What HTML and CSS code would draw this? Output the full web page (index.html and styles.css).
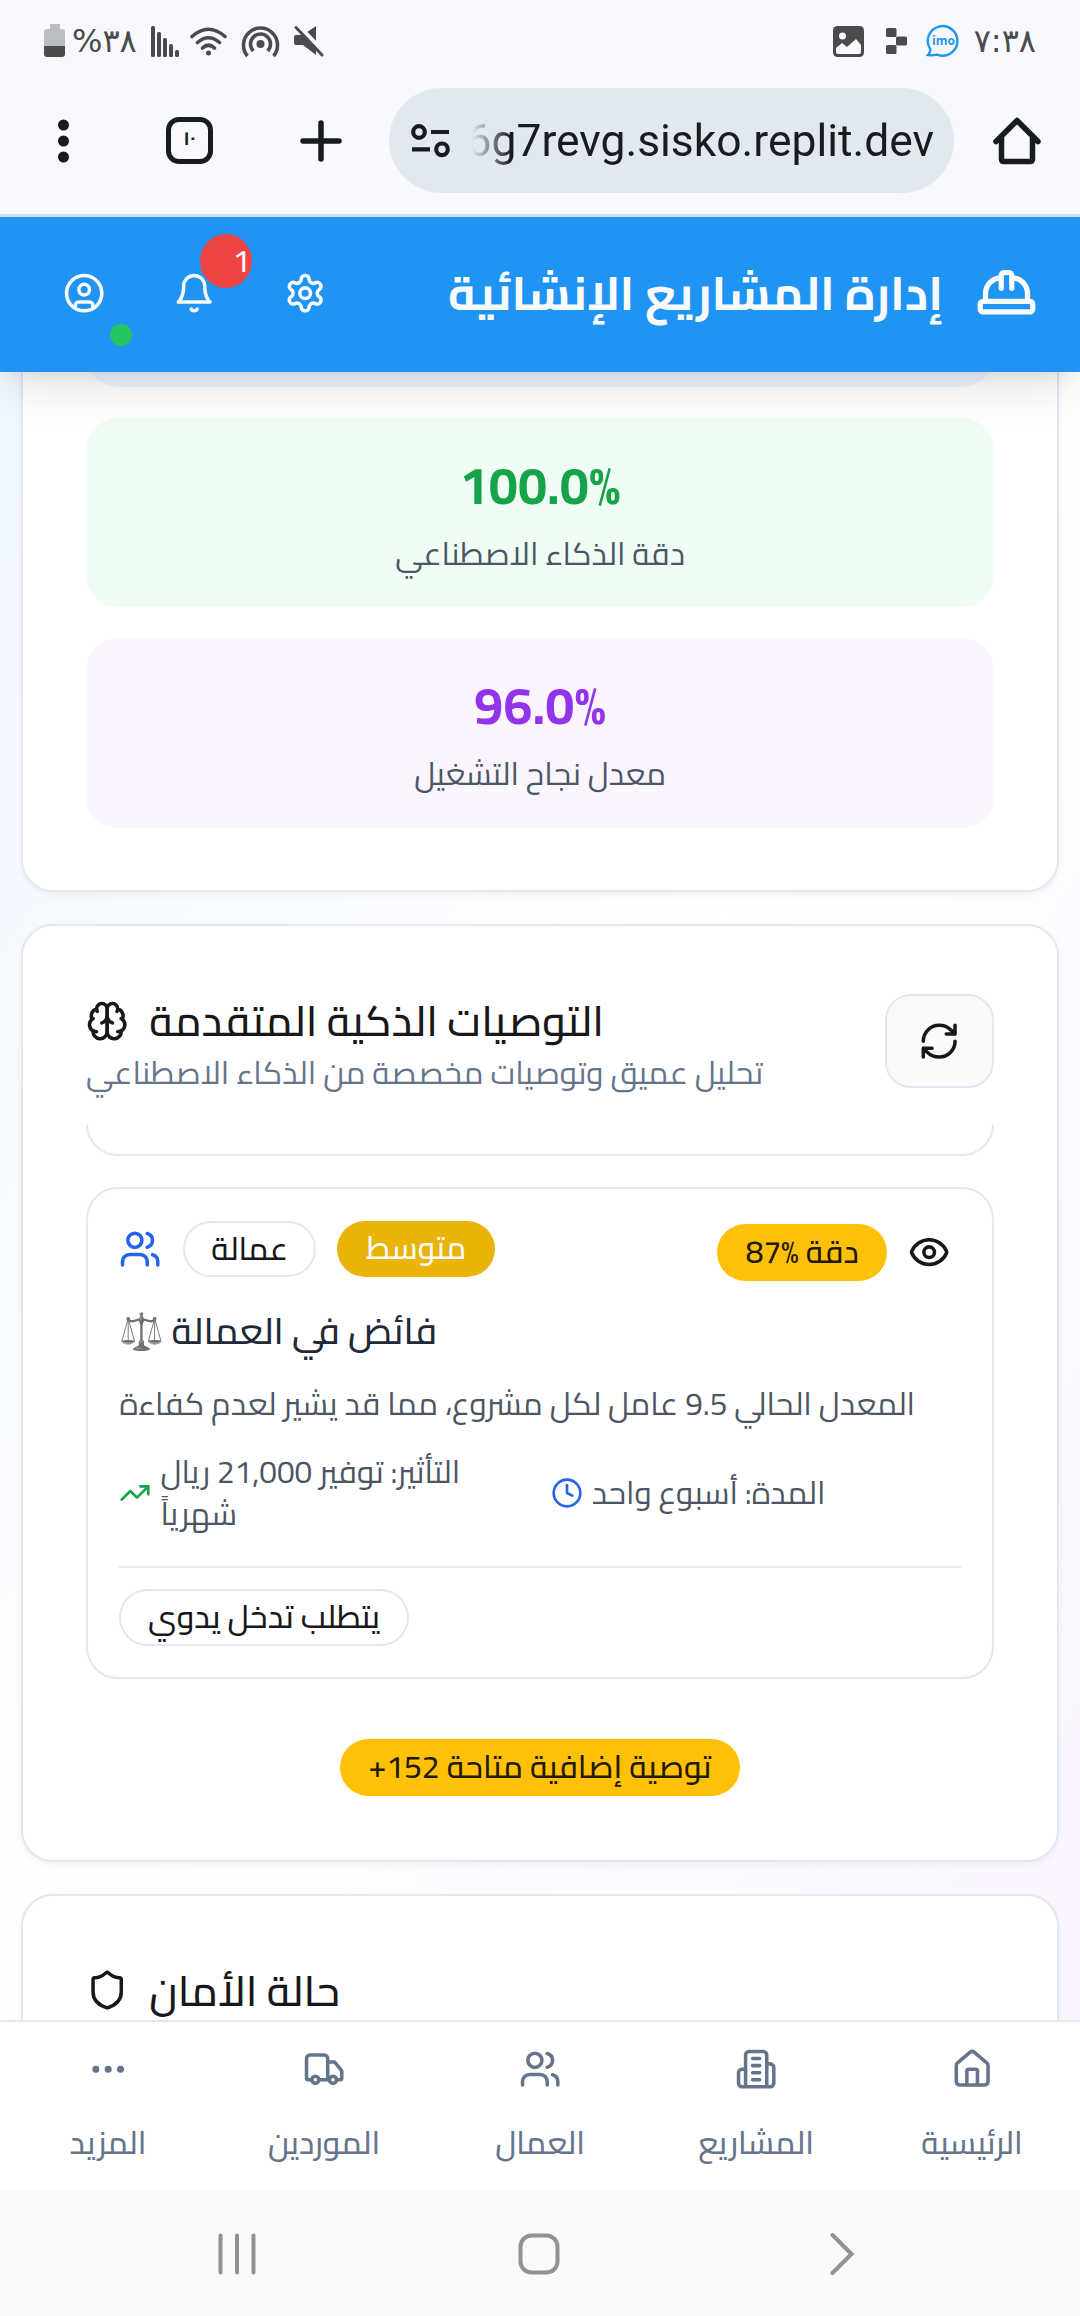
FILE: index.html
```html
<!DOCTYPE html>
<html lang="ar">
<head>
<meta charset="utf-8">
<title>إدارة المشاريع الإنشائية</title>
<link rel="stylesheet" href="styles.css">
</head>
<body>
<div class="status">
  <div class="status-group">
    <svg class="battery" width="22" height="34" viewBox="0 0 22 34"><path d="M6 0h10v5h2a3 3 0 0 1 3 3v15H0V8a3 3 0 0 1 3-3h3z" fill="#babdc2"/><path d="M0 22h21v8a3 3 0 0 1-3 3H3a3 3 0 0 1-3-3z" fill="#4a4b4d"/></svg>
    <span class="status-text battery-text">%٣٨</span>
    <svg class="signal" width="28" height="31" viewBox="0 0 28 31" fill="#4a4b4d"><rect width="4" height="31" rx="1.5"/><rect x="6" y="6" width="4" height="25" rx="1.5"/><rect x="12" y="12" width="4" height="19" rx="1.5"/><rect x="18" y="18" width="4" height="13" rx="1.5"/><rect x="24" y="24" width="4" height="7" rx="1.5"/></svg>
    <svg class="wifi" width="37" height="29" viewBox="0 0 37 29" fill="none" stroke="#4a4b4d" stroke-width="3.6" stroke-linecap="round"><path d="M2 9.500Q18.500-5 35 9.500M7.500 15.500Q18.500 6 29.500 15.500M12.500 21Q18.500 15.500 24.500 21"/><circle cx="18.500" cy="26" r="2.500" fill="#4a4b4d" stroke="none"/></svg>
    <svg class="hotspot" width="39" height="34" viewBox="0 0 39 34" fill="none" stroke="#4a4b4d" stroke-width="3.600"><path d="M6.500 32a17 17 0 1 1 26 0M12.300 27a10 10 0 1 1 14.400 0"/><circle cx="19.500" cy="20" r="4" fill="#4a4b4d" stroke="none"/></svg>
    <svg class="mute" width="30" height="32" viewBox="0 0 30 32"><path d="M2 10h7L22 1v29L9 20H2q-2 0-2-2v-6q0-2 2-2z" fill="#4a4b4d"/><path d="M3-1L31 28" stroke="#f7f9fe" stroke-width="4"/><path d="M2 2.500L28 30" stroke="#4a4b4d" stroke-width="3" stroke-linecap="round"/></svg>
  </div>
  <div class="status-group">
    <svg class="gallery" width="31" height="31" viewBox="0 0 31 31"><rect width="31" height="31" rx="4.500" fill="#4a4b4d"/><circle cx="9.500" cy="10" r="3.500" fill="#f7f9fe"/><path d="M3 22l6-5 5 4 9-8 5 6v7q0 2-2 2H5q-2 0-2-2z" fill="#f7f9fe"/></svg>
    <svg class="replit" width="21" height="26" viewBox="0 0 21 26" fill="#4a4b4d"><rect width="10.500" height="9" rx="1.500"/><rect x="10" y="8.500" width="11" height="9" rx="1.500"/><rect y="17" width="10.500" height="9" rx="1.500"/></svg>
    <svg class="imo" width="34" height="34" viewBox="0 0 34 34"><path d="M4.200 25A14.800 14.800 0 1 1 11 30.600Q7 31.500 2 31q2.500-2 2.200-6z" fill="none" stroke="#2098ec" stroke-width="2.400"/><text x="17.500" y="21" text-anchor="middle" class="imo-text">imo</text></svg>
    <span class="status-text">٧:٣٨</span>
  </div>
</div>

<div class="browser">
  <svg class="menu" width="11" height="44" viewBox="0 0 11 44" fill="#191c1f"><circle cx="5.500" cy="6" r="5.500"/><circle cx="5.500" cy="22" r="5.500"/><circle cx="5.500" cy="38" r="5.500"/></svg>
  <div class="tabs">١٠</div>
  <svg class="plus" width="42" height="42" viewBox="0 0 42 42" stroke="#191c1f" stroke-width="5.500" stroke-linecap="round"><path d="M21 3v36M3 21h36"/></svg>
  <div class="url">
    <svg width="39" height="34" viewBox="0 0 39 34" fill="none" stroke="#191c1f" stroke-width="4.200"><circle cx="8" cy="8" r="5.800"/><path d="M20 8h18M1 25.300h18"/><circle cx="31" cy="25.300" r="5.800"/></svg>
    <span class="url-text">6g7revg.sisko.replit.dev</span>
  </div>
  <svg class="chrome-home" width="48" height="48" viewBox="0 0 48 48" fill="none" stroke="#191c1f" stroke-width="5.500" stroke-linejoin="round" stroke-linecap="round"><path d="M3 24.500L24 3.500l21 21M8.500 21v21q0 2.500 2.500 2.500h26q2.500 0 2.500-2.500V21"/></svg>
</div>

<header class="header">
  <div class="actions">
    <div class="action">
      <svg class="icon" viewBox="0 0 24 24"><circle cx="12" cy="12" r="10"/><circle cx="12" cy="10" r="3"/><path d="M7 20.662V19a2 2 0 0 1 2-2h6a2 2 0 0 1 2 2v1.662"/></svg>
      <span class="online"></span>
    </div>
    <div class="action">
      <svg class="icon" viewBox="0 0 24 24"><path d="M6 8a6 6 0 0 1 12 0c0 7 3 9 3 9H3s3-2 3-9"/><path d="M10.300 21a1.940 1.940 0 0 0 3.400 0"/></svg>
      <span class="badge">1</span>
    </div>
    <div class="action">
      <svg class="icon" viewBox="0 0 24 24"><path d="M12.220 2h-.44a2 2 0 0 0-2 2v.18a2 2 0 0 1-1 1.730l-.43.25a2 2 0 0 1-2 0l-.15-.08a2 2 0 0 0-2.730.73l-.22.38a2 2 0 0 0 .73 2.730l.15.1a2 2 0 0 1 1 1.720v.51a2 2 0 0 1-1 1.740l-.15.09a2 2 0 0 0-.73 2.730l.22.38a2 2 0 0 0 2.730.73l.15-.08a2 2 0 0 1 2 0l.43.25a2 2 0 0 1 1 1.730V20a2 2 0 0 0 2 2h.44a2 2 0 0 0 2-2v-.18a2 2 0 0 1 1-1.730l.43-.25a2 2 0 0 1 2 0l.15.08a2 2 0 0 0 2.730-.73l.22-.39a2 2 0 0 0-.73-2.730l-.15-.08a2 2 0 0 1-1-1.740v-.5a2 2 0 0 1 1-1.740l.15-.09a2 2 0 0 0 .73-2.730l-.22-.38a2 2 0 0 0-2.730-.73l-.15.08a2 2 0 0 1-2 0l-.43-.25a2 2 0 0 1-1-1.730V4a2 2 0 0 0-2-2z"/><circle cx="12" cy="12" r="3"/></svg>
    </div>
  </div>
  <div class="brand">
    <h1 dir="rtl">إدارة المشاريع الإنشائية</h1>
    <svg class="icon hat" viewBox="0 0 24 24"><path d="M10 10V5a1 1 0 0 1 1-1h2a1 1 0 0 1 1 1v5M14 6a6 6 0 0 1 6 6v3M4 15v-3a6 6 0 0 1 6-6"/><rect x="2" y="15" width="20" height="4" rx="1"/></svg>
  </div>
</header>

<main class="content">
  <section class="card stats">
    <div class="tile blue"></div>
    <div class="tile green"><div class="value">100.0%</div><div class="label" dir="rtl">دقة الذكاء الاصطناعي</div></div>
    <div class="tile purple"><div class="value">96.0%</div><div class="label" dir="rtl">معدل نجاح التشغيل</div></div>
  </section>

  <section class="card advice">
    <div class="card-head">
      <div>
        <div class="title"><svg class="icon" viewBox="0 0 24 24"><path d="M12 5a3 3 0 1 0-5.997.125 4 4 0 0 0-2.526 5.770 4 4 0 0 0 .556 6.588A4 4 0 1 0 12 18Z"/><path d="M12 5a3 3 0 1 1 5.997.125 4 4 0 0 1 2.526 5.770 4 4 0 0 1-.556 6.588A4 4 0 1 1 12 18Z"/><path d="M15 13a4.500 4.500 0 0 1-3-4 4.500 4.500 0 0 1-3 4M17.599 6.500a3 3 0 0 0 .399-1.375M6.003 5.125A3 3 0 0 0 6.401 6.500M3.477 10.896a4 4 0 0 1 .585-.396M19.938 10.500a4 4 0 0 1 .585.396M6 18a4 4 0 0 1-1.967-.516M19.967 17.484A4 4 0 0 1 18 18"/></svg><h2 dir="rtl">التوصيات الذكية المتقدمة</h2></div>
        <p class="subtitle" dir="rtl">تحليل عميق وتوصيات مخصصة من الذكاء الاصطناعي</p>
      </div>
      <div class="refresh"><svg class="icon" viewBox="0 0 24 24"><path d="M3 12a9 9 0 0 1 9-9 9.750 9.750 0 0 1 6.740 2.740L21 8M21 3v5h-5M21 12a9 9 0 0 1-9 9 9.750 9.750 0 0 1-6.740-2.740L3 16M8 16H3v5"/></svg></div>
    </div>
    <div class="list">
      <div class="item-tail"></div>
      <article class="item">
        <div class="item-top">
          <div class="tags">
            <svg class="icon users" viewBox="0 0 24 24"><path d="M16 21v-2a4 4 0 0 0-4-4H6a4 4 0 0 0-4 4v2"/><circle cx="9" cy="7" r="4"/><path d="M22 21v-2a4 4 0 0 0-3-3.870M16 3.130a4 4 0 0 1 0 7.750"/></svg>
            <span class="chip outline">عمالة</span>
            <span class="chip medium">متوسط</span>
          </div>
          <div class="meta">
            <span class="chip amber">87% دقة</span>
            <svg class="icon" viewBox="0 0 24 24"><path d="M2.062 12.348a1 1 0 0 1 0-.696 10.750 10.750 0 0 1 19.876 0 1 1 0 0 1 0 .696 10.750 10.750 0 0 1-19.876 0"/><circle cx="12" cy="12" r="3"/></svg>
          </div>
        </div>
        <h3><span class="emoji">⚖️</span><span dir="rtl">فائض في العمالة</span></h3>
        <p class="desc" dir="rtl">المعدل الحالي 9.5 عامل لكل مشروع، مما قد يشير لعدم كفاءة</p>
        <div class="facts">
          <div class="fact"><svg class="icon small up" viewBox="0 0 24 24"><path d="M22 7l-8.500 8.500-5-5L2 17M16 7h6v6"/></svg><span dir="rtl">التأثير: توفير 21,000 ريال<br>شهرياً</span></div>
          <div class="fact"><svg class="icon small time" viewBox="0 0 24 24"><circle cx="12" cy="12" r="10"/><path d="M12 6v6l4 2"/></svg><span dir="rtl">المدة: أسبوع واحد</span></div>
        </div>
        <div class="item-foot"><span class="chip outline tall">يتطلب تدخل يدوي</span></div>
      </article>
    </div>
    <div class="more-row"><span class="chip amber">+152 توصية إضافية متاحة</span></div>
  </section>

  <section class="card safety">
    <div class="title"><svg class="icon" viewBox="0 0 24 24"><path d="M20 13c0 5-3.500 7.500-7.660 8.950a1 1 0 0 1-.67-.01C7.500 20.500 4 18 4 13V6a1 1 0 0 1 1-1c2 0 4.500-1.200 6.240-2.720a1.170 1.170 0 0 1 1.520 0C14.510 3.810 17 5 19 5a1 1 0 0 1 1 1z"/></svg><h2 dir="rtl">حالة الأمان</h2></div>
  </section>
</main>

<nav class="nav">
  <div class="tab"><svg class="icon" viewBox="0 0 24 24" fill="currentColor"><circle cx="12" cy="12" r="1"/><circle cx="19" cy="12" r="1"/><circle cx="5" cy="12" r="1"/></svg><span>المزيد</span></div>
  <div class="tab"><svg class="icon" viewBox="0 0 24 24"><path d="M14 18V6a2 2 0 0 0-2-2H4a2 2 0 0 0-2 2v11a1 1 0 0 0 1 1h2M15 18H9M19 18h2a1 1 0 0 0 1-1v-3.650a1 1 0 0 0-.22-.624l-3.480-4.350A1 1 0 0 0 17.520 8H14"/><circle cx="17" cy="18" r="2"/><circle cx="7" cy="18" r="2"/></svg><span>الموردين</span></div>
  <div class="tab"><svg class="icon" viewBox="0 0 24 24"><path d="M16 21v-2a4 4 0 0 0-4-4H6a4 4 0 0 0-4 4v2"/><circle cx="9" cy="7" r="4"/><path d="M22 21v-2a4 4 0 0 0-3-3.870M16 3.130a4 4 0 0 1 0 7.750"/></svg><span>العمال</span></div>
  <div class="tab"><svg class="icon" viewBox="0 0 24 24"><path d="M6 22V4a2 2 0 0 1 2-2h8a2 2 0 0 1 2 2v18ZM6 12H4a2 2 0 0 0-2 2v6a2 2 0 0 0 2 2h2M18 9h2a2 2 0 0 1 2 2v9a2 2 0 0 1-2 2h-2M10 6h4M10 10h4M10 14h4M10 18h4"/></svg><span>المشاريع</span></div>
  <div class="tab"><svg class="icon" viewBox="0 0 24 24"><path d="M15 21v-8a1 1 0 0 0-1-1h-4a1 1 0 0 0-1 1v8"/><path d="M3 10a2 2 0 0 1 .709-1.528l7-5.999a2 2 0 0 1 2.582 0l7 5.999A2 2 0 0 1 21 10v9a2 2 0 0 1-2 2H5a2 2 0 0 1-2-2z"/></svg><span>الرئيسية</span></div>
</nav>

<div class="system">
  <svg width="42" height="42" viewBox="0 0 42 42"><path d="M4.500 2.500v37M21 2.500v37M37.500 2.500v37"/></svg>
  <svg width="42" height="42" viewBox="0 0 42 42"><rect x="2.500" y="2.500" width="37" height="37" rx="11"/></svg>
  <svg width="42" height="42" viewBox="0 0 42 42"><path d="M12.500 2l19 19-19 19"/></svg>
</div>
</body>
</html>
```
FILE: styles.css
```css
* { box-sizing: border-box; margin: 0; }
body {
  width: 1080px;
  height: 2316px;
  overflow: hidden;
  display: flex;
  flex-direction: column;
  background: #f7f9fe;
  color: #18181b;
  font: 500 31.5px/42.67px Cairo, "DejaVu Sans", sans-serif;
}
svg { display: block; flex: none; }
h1, h2, h3 { font-weight: inherit; }

.icon {
  width: 42.33px;
  height: 42.33px;
  fill: none;
  stroke: currentColor;
  stroke-width: 2;
  stroke-linecap: round;
  stroke-linejoin: round;
}
.icon[fill] { fill: currentColor; }
.icon.small { width: 32px; height: 32px; }

/* Device status bar */
.status {
  height: 67px;
  padding: 15px 44px 0;
  display: flex;
  justify-content: space-between;
  align-items: center;
  color: #4a4b4d;
}
.status-group { display: flex; align-items: center; }
.status-text { font: 400 32px/40px "DejaVu Sans", sans-serif; direction: ltr; }
.battery-text { margin: 0 14px 0 6px; }
.wifi { margin-left: 11px; }
.hotspot { margin-left: 14px; }
.mute { margin-left: 14px; }
.replit { margin-left: 22px; }
.imo { margin: 0 14px 0 19px; }
.imo-text { font: 700 12px "Open Sans", sans-serif; fill: #2098ec; }

/* Browser toolbar */
.browser {
  height: 150px;
  padding: 0 39px 0 58px;
  display: flex;
  align-items: center;
  border-bottom: 3px solid #cfe2ee;
  color: #191c1f;
}
.tabs {
  width: 47px;
  height: 47px;
  margin-left: 97px;
  border: 5.5px solid #191c1f;
  border-radius: 13px;
  font: 700 19px/32px Cairo, "DejaVu Sans", sans-serif;
  text-align: center;
}
.plus { margin-left: 87px; }
.url {
  width: 565px;
  height: 105px;
  margin: 0 39px 0 47px;
  padding: 0 20px 0 22px;
  display: flex;
  align-items: center;
  justify-content: space-between;
  border-radius: 53px;
  background: #e2e8f0;
}
.url-text {
  font: 400 44.4px/60px Roboto, sans-serif;
  background: linear-gradient(90deg, rgba(25, 28, 31, 0) 5px, #191c1f 44px);
  -webkit-background-clip: text;
  background-clip: text;
  color: transparent;
}

/* App header */
.header {
  position: relative;
  z-index: 1;
  flex: none;
  height: 155px;
  padding: 0 42px 3px 63px;
  display: flex;
  justify-content: space-between;
  align-items: center;
  background: #2094f3;
  color: #f8fafc;
  box-shadow: 0 27px 40px -8px rgba(0, 0, 0, .1), 0 11px 16px -11px rgba(0, 0, 0, .1);
}
.actions { display: flex; gap: 68px; }
.action { position: relative; }
.online {
  position: absolute;
  left: 47px;
  top: 52px;
  width: 22px;
  height: 22px;
  border-radius: 50%;
  background: #22c55e;
}
.badge {
  position: absolute;
  left: 27px;
  top: -38px;
  width: 52px;
  height: 54px;
  padding-right: 2px;
  border-radius: 50%;
  background: #ef4444;
  font-size: 31.5px;
  line-height: 54px;
  text-align: right;
}
.brand { display: flex; align-items: center; gap: 32px; }
.brand h1 { font-size: 47.25px; line-height: 64px; font-weight: 700; }
.icon.hat { width: 63px; height: 63px; }

/* Scrolling content */
.content {
  flex: none;
  height: 1648px;
  padding: 0 21.33px;
  overflow: hidden;
  background: linear-gradient(to bottom right, #f1f7ff, #ffffff, #faf5ff);
}
.card {
  padding: 62px 62.67px 0;
  border: 2px solid #e2e8f0;
  border-radius: 32px;
  background: #fff;
  box-shadow: 0 3px 6px rgba(0, 0, 0, .05);
}
.stats {
  display: flow-root;
  height: 520px;
  padding-top: 0;
  border-top: 0;
  border-radius: 0 0 32px 32px;
}
.tile {
  height: 189.5px;
  margin-bottom: 31px;
  padding-top: 30px;
  border-radius: 32px;
  text-align: center;
}
.tile.blue { margin-top: -175px; background: #eff6ff; }
.tile.green { background: #f0fdf4; }
.tile.purple { background: #faf5ff; }
.value { margin-bottom: 10.5px; font-size: 52.5px; line-height: 74.67px; font-weight: 700; }
.green .value { color: #16a34a; }
.purple .value { color: #9333ea; }
.label { color: #4b5563; font-weight: 400; }

.advice { height: 937.5px; margin-top: 32px; }
.card-head { height: 136.5px; display: flex; justify-content: space-between; }
.title { display: flex; align-items: center; gap: 21px; }
.title h2 { font-size: 42.5px; line-height: 42.67px; padding-top: 1px; }
.card-head .title { margin-top: 11px; }
.subtitle { margin-top: 9.5px; color: #64748b; font-weight: 400; text-align: left; }
.refresh {
  width: 109px;
  height: 94px;
  margin-top: 6px;
  display: flex;
  justify-content: center;
  align-items: center;
  border: 2px solid #e2e8f0;
  border-radius: 26px;
  background: #fafafa;
}
.list { overflow: hidden; }
.item-tail {
  height: 64px;
  margin: -33px 0 31px;
  border: 2px solid #e2e8f0;
  border-radius: 32px;
}
.item {
  height: 492px;
  padding: 31.5px;
  border: 2px solid #e2e8f0;
  border-radius: 32px;
}
.item-top { height: 64px; display: flex; justify-content: space-between; align-items: center; }
.tags, .meta { display: flex; align-items: center; gap: 21px; }
.tags { margin-bottom: 6px; }
.meta { padding-right: 10px; }
.users { color: #2563eb; }
.chip {
  display: inline-block;
  height: 57px;
  padding: 0 28.5px;
  border-radius: 29px;
  line-height: 56px;
  white-space: nowrap;
}
.outline { height: 56px; padding: 0 26.5px; border: 2px solid #e2e8f0; line-height: 51px; }
.medium { height: 56px; background: #eab308; color: #f8fafc; line-height: 54px; }
.amber { background: #ffc107; color: #231a04; line-height: 55.5px; }
.outline.tall { height: 57px; font-size: 31.9px; }
.item h3 {
  margin-top: 21px;
  display: flex;
  align-items: center;
  gap: 9px;
  font-size: 36.95px;
  line-height: 52px;
  color: #1f2937;
}
.emoji { width: 43px; font-size: 36px; filter: grayscale(1) brightness(.9); }
.desc { margin-top: 26px; color: #4b5563; font-weight: 400; text-align: left; }
.facts { margin-top: 25px; display: grid; grid-template-columns: 1fr 1fr; gap: 21.33px; }
.fact { display: flex; align-items: center; gap: 9px; color: #4b5563; font-weight: 400; }
.fact span { text-align: left; }
.up { color: #16a34a; }
.time { color: #2563eb; }
.item-foot { margin-top: 30px; padding-top: 21px; border-top: 2px solid #e2e8f0; display: flex; }
.more-row { margin-top: 60px; display: flex; justify-content: center; }
.more-row .chip { font-size: 31.8px; }

.safety { height: 300px; margin-top: 32px; padding-top: 73px; }

/* Bottom navigation */
.nav {
  flex: none;
  height: 170px;
  padding-top: 26px;
  display: grid;
  grid-template-columns: repeat(5, 1fr);
  border-top: 2px solid #e2e8f0;
  background: #fff;
  color: #64748b;
}
.tab { display: flex; flex-direction: column; align-items: center; gap: 31.5px; }

/* Device navigation */
.system {
  flex: none;
  height: 126px;
  padding: 2px 2px 0 0;
  display: flex;
  justify-content: center;
  align-items: center;
  gap: 260px;
  background: #fafafa;
}
.system svg { fill: none; stroke: #929292; stroke-width: 4; stroke-linecap: round; }
```
